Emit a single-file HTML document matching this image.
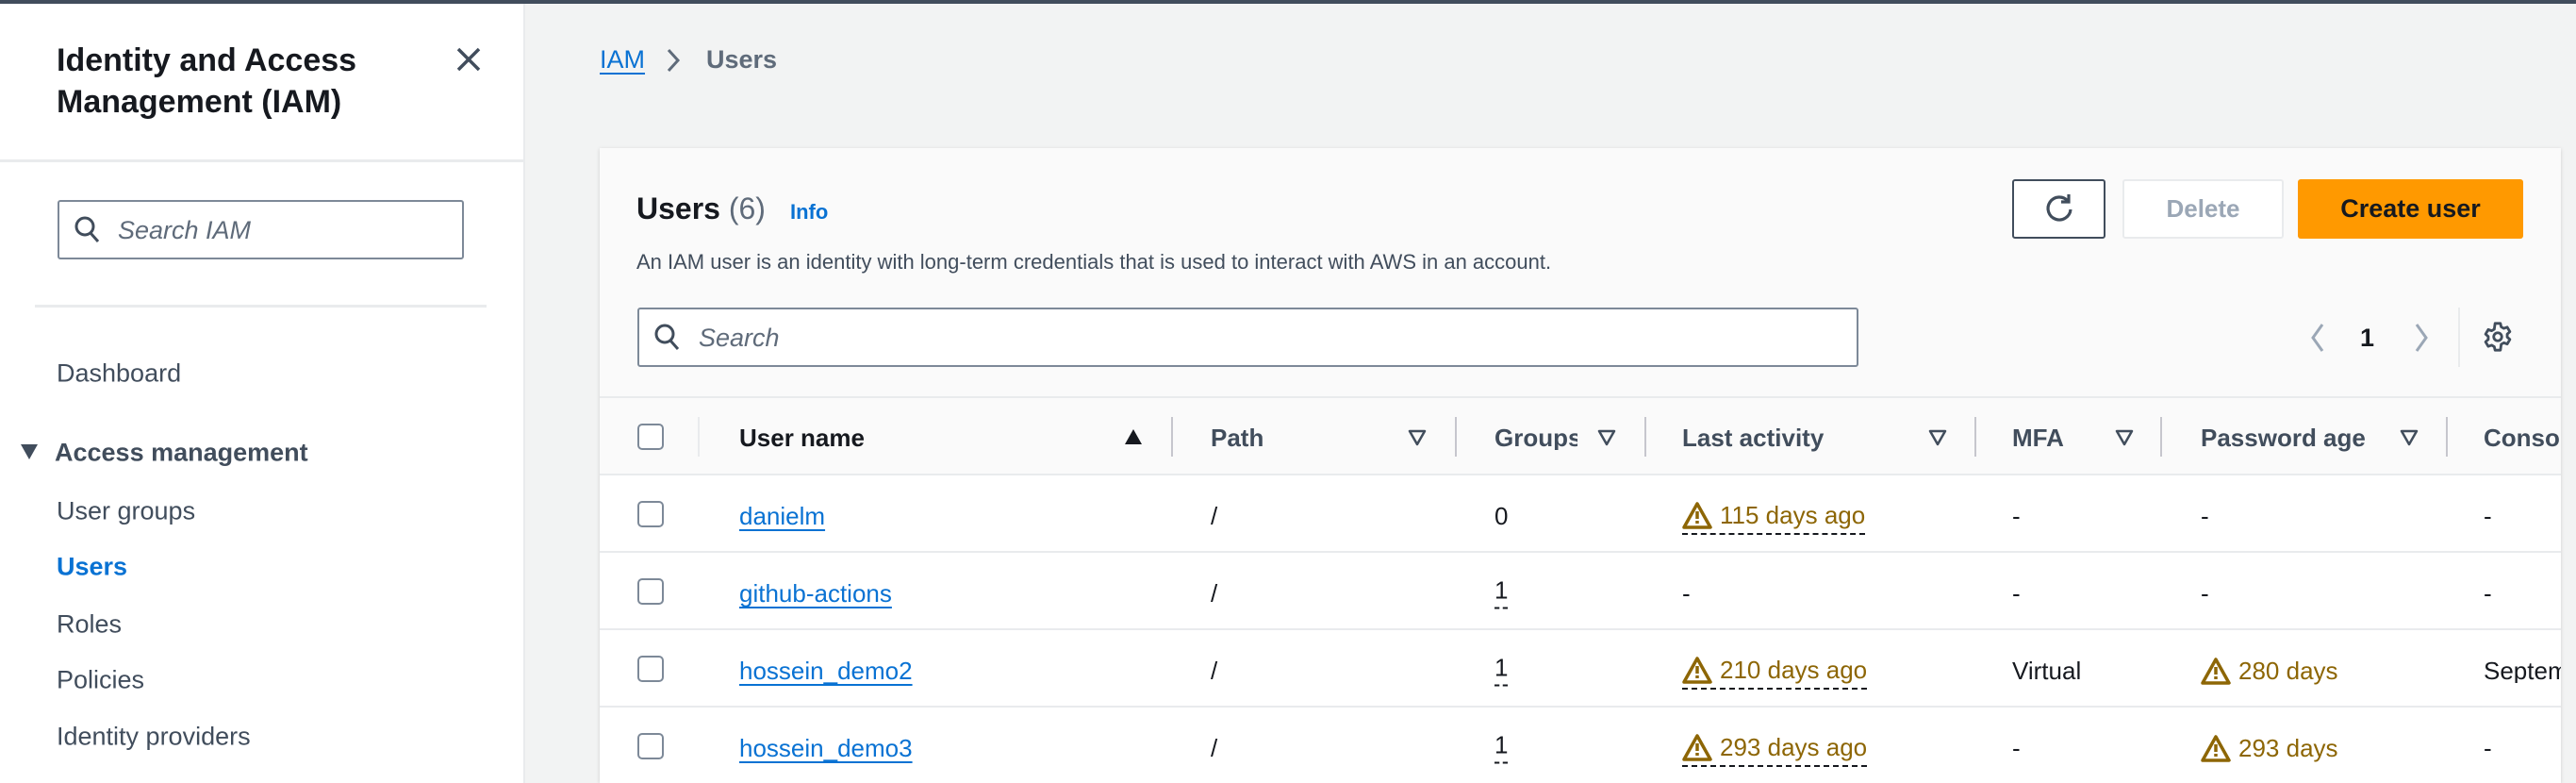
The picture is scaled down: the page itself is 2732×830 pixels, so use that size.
<!DOCTYPE html>
<html><head><meta charset="utf-8"><style>
*{margin:0;padding:0;box-sizing:border-box}
html,body{width:2732px;height:830px;overflow:hidden}
body{background:#f2f3f3;font-family:"Liberation Sans",sans-serif;color:#16191f;position:relative}
.a{position:absolute;white-space:nowrap}
.topbar{left:0;top:0;width:2732px;height:4px;background:#414d5c}
.side{left:0;top:4px;width:557px;height:826px;background:#fff;border-right:2px solid #e9ebed}
.nav{font-size:27px;color:#414d5c;line-height:1;transform:translateY(-50%)}
.link{color:#0972d3;text-decoration:underline;text-underline-offset:5px;text-decoration-thickness:2px}
.warn{color:#8d6605;border-bottom:2px dashed #16191f;padding-bottom:4px;display:flex;align-items:center;gap:8px}
.pw{color:#8d6605;display:flex;align-items:center;gap:8px}
.cell{font-size:26px;line-height:1;transform:translateY(-50%)}
.hdr{font-size:26px;font-weight:bold;color:#414d5c;line-height:1;transform:translateY(-50%)}
.sep{width:2px;height:42px;background:#c6c6cd;top:442px}
.cb{width:28px;height:28px;border:2px solid #7d8998;border-radius:5px;background:#fff;left:676px}
.rowline{left:636px;width:2080px;height:2px;background:#e9ebed}
</style></head><body>
<div class="a topbar"></div>
<div class="a side"></div>
<div class="a" style="left:60px;top:42px;font-size:34px;font-weight:bold;line-height:44px;color:#16191f">Identity and Access<br>Management (IAM)</div>
<svg class="a" style="left:483px;top:49px" width="28" height="28" viewBox="0 0 28 28"><path d="M3 3L25 25M25 3L3 25" stroke="#414d5c" stroke-width="3.5" fill="none"/></svg>
<div class="a" style="left:0;top:169px;width:557px;height:3px;background:#e9ebed"></div>
<div class="a" style="left:61px;top:212px;width:431px;height:63px;border:2px solid #7d8998;border-radius:3px;background:#fff"></div>
<svg class="a" style="left:78px;top:228px" width="30" height="32" viewBox="0 0 30 32"><circle cx="12" cy="12" r="9" stroke="#414d5c" stroke-width="3" fill="none"/><path d="M18 19l8 9" stroke="#414d5c" stroke-width="3"/></svg>
<div class="a" style="left:125px;top:229px;font-size:27px;font-style:italic;color:#5f6b7a">Search IAM</div>
<div class="a" style="left:37px;top:323px;width:479px;height:3px;background:#e9ebed"></div>
<div class="a nav" style="left:60px;top:396px">Dashboard</div>
<svg class="a" style="left:20px;top:469px" width="22" height="20"><path d="M2 2h18L11 18z" fill="#414d5c"/></svg>
<div class="a nav" style="left:58px;top:480px;font-weight:bold">Access management</div>
<div class="a nav" style="left:60px;top:542px">User groups</div>
<div class="a nav" style="left:60px;top:601px;color:#0972d3;font-weight:bold">Users</div>
<div class="a nav" style="left:60px;top:662px">Roles</div>
<div class="a nav" style="left:60px;top:721px">Policies</div>
<div class="a nav" style="left:60px;top:781px">Identity providers</div>

<div class="a link" style="left:636px;top:48px;font-size:27px">IAM</div>
<svg class="a" style="left:706px;top:50px" width="16" height="28"><path d="M3 3l10 11-10 11" stroke="#5f6b7a" stroke-width="3" fill="none"/></svg>
<div class="a" style="left:749px;top:48px;font-size:27px;font-weight:bold;color:#5f6b7a">Users</div>

<div class="a" style="left:636px;top:157px;width:2080px;height:673px;background:#fafafa;box-shadow:0 1px 4px rgba(0,0,0,.15)"></div>
<div class="a" style="left:636px;top:422px;width:2080px;height:408px;background:#fff"></div>
<div class="a" style="left:636px;top:420px;width:2080px;height:84px;background:#fafafa;border-top:2px solid #e9ebed;border-bottom:2px solid #e9ebed"></div>

<div class="a" style="left:675px;top:203px;font-size:32px;font-weight:bold">Users <span style="font-weight:normal;color:#5f6b7a">(6)</span></div>
<div class="a" style="left:838px;top:212px;font-size:22px;font-weight:bold;color:#0972d3">Info</div>
<div class="a" style="left:675px;top:265px;font-size:22px;color:#414d5c">An IAM user is an identity with long-term credentials that is used to interact with AWS in an account.</div>

<div class="a" style="left:2134px;top:190px;width:99px;height:63px;border:2px solid #414d5c;border-radius:3px;background:#fff"></div>
<svg class="a" style="left:2166px;top:204px" width="36" height="36" viewBox="0 0 36 36"><path d="M27 9A12 12 0 1 0 30 18" stroke="#414d5c" stroke-width="3.2" fill="none"/><path d="M20 8h8V0" stroke="#414d5c" stroke-width="3.2" fill="none" transform="translate(0,2)"/></svg>
<div class="a" style="left:2251px;top:190px;width:171px;height:63px;border:2px solid #e9ebed;border-radius:3px;background:#fff;font-size:26px;font-weight:bold;color:#9ba7b6;text-align:center;line-height:59px">Delete</div>
<div class="a" style="left:2437px;top:190px;width:239px;height:63px;border-radius:3px;background:#ff9900;font-size:27px;font-weight:bold;color:#16191f;text-align:center;line-height:63px">Create user</div>

<div class="a" style="left:676px;top:326px;width:1295px;height:63px;border:2px solid #7d8998;border-radius:3px;background:#fff"></div>
<svg class="a" style="left:693px;top:342px" width="30" height="32" viewBox="0 0 30 32"><circle cx="12" cy="12" r="9" stroke="#414d5c" stroke-width="3" fill="none"/><path d="M18 19l8 9" stroke="#414d5c" stroke-width="3"/></svg>
<div class="a" style="left:741px;top:343px;font-size:27px;font-style:italic;color:#5f6b7a">Search</div>

<svg class="a" style="left:2448px;top:341px" width="20" height="34"><path d="M15 3L5 17l10 14" stroke="#9ba7b6" stroke-width="3" fill="none"/></svg>
<div class="a" style="left:2503px;top:343px;font-size:27px;font-weight:bold">1</div>
<svg class="a" style="left:2558px;top:341px" width="20" height="34"><path d="M5 3l10 14L5 31" stroke="#9ba7b6" stroke-width="3" fill="none"/></svg>
<div class="a" style="left:2607px;top:326px;width:2px;height:63px;background:#e9ebed"></div>
<svg class="a" style="left:2632px;top:340px" width="34" height="34" viewBox="0 0 24 24"><path d="M10 2h4l.6 2.6 2 1.1 2.5-.9 2 3.4-2 1.8v2.2l2 1.8-2 3.4-2.5-.9-2 1.1L14 22h-4l-.6-2.6-2-1.1-2.5.9-2-3.4 2-1.8V11.8l-2-1.8 2-3.4 2.5.9 2-1.1z" stroke="#414d5c" stroke-width="2" fill="none" stroke-linejoin="round"/><circle cx="12" cy="12" r="3" stroke="#414d5c" stroke-width="2" fill="none"/></svg>

<div class="a cb" style="top:449px"></div>
<div class="a sep" style="left:740px;background:#e9ebed"></div>
<div class="a hdr" style="left:784px;top:464px;color:#16191f">User name</div>
<svg class="a" style="left:1192px;top:454px" width="20" height="18"><path d="M10 1L19 17H1z" fill="#16191f"/></svg>
<div class="a sep" style="left:1242px"></div>
<div class="a hdr" style="left:1284px;top:464px">Path</div>
<svg class="a" style="left:1493px;top:455px" width="20" height="18"><path d="M2 2h16L10 16z" stroke="#414d5c" stroke-width="2.5" fill="none" stroke-linejoin="round"/></svg>
<div class="a sep" style="left:1543px"></div>
<div class="a hdr" style="left:1585px;top:464px;width:88px;overflow:hidden">Groups</div>
<svg class="a" style="left:1694px;top:455px" width="20" height="18"><path d="M2 2h16L10 16z" stroke="#414d5c" stroke-width="2.5" fill="none" stroke-linejoin="round"/></svg>
<div class="a sep" style="left:1744px"></div>
<div class="a hdr" style="left:1784px;top:464px">Last activity</div>
<svg class="a" style="left:2045px;top:455px" width="20" height="18"><path d="M2 2h16L10 16z" stroke="#414d5c" stroke-width="2.5" fill="none" stroke-linejoin="round"/></svg>
<div class="a sep" style="left:2094px"></div>
<div class="a hdr" style="left:2134px;top:464px">MFA</div>
<svg class="a" style="left:2243px;top:455px" width="20" height="18"><path d="M2 2h16L10 16z" stroke="#414d5c" stroke-width="2.5" fill="none" stroke-linejoin="round"/></svg>
<div class="a sep" style="left:2291px"></div>
<div class="a hdr" style="left:2334px;top:464px">Password age</div>
<svg class="a" style="left:2545px;top:455px" width="20" height="18"><path d="M2 2h16L10 16z" stroke="#414d5c" stroke-width="2.5" fill="none" stroke-linejoin="round"/></svg>
<div class="a sep" style="left:2594px"></div>
<div class="a hdr" style="left:2634px;top:464px;width:82px;overflow:hidden">Console</div>

<div class="a rowline" style="top:584px"></div>
<div class="a rowline" style="top:666px"></div>
<div class="a rowline" style="top:748px"></div>

<div class="a cb" style="top:531px"></div>
<div class="a cell link" style="left:784px;top:547px">danielm</div>
<div class="a cell" style="left:1284px;top:547px">/</div>
<div class="a cell" style="left:1585px;top:547px">0</div>
<div class="a cell warn" style="left:1784px;top:549px"><svg width="32" height="30" viewBox="0 0 32 30"><path d="M16 3L30 28H2z" stroke="#8d6605" stroke-width="3.5" fill="none" stroke-linejoin="round"/><path d="M16 11v8M16 21v3" stroke="#8d6605" stroke-width="3.5"/></svg>115 days ago</div>
<div class="a cell" style="left:2134px;top:547px">-</div>
<div class="a cell" style="left:2334px;top:547px">-</div>
<div class="a cell" style="left:2634px;top:547px">-</div>

<div class="a cb" style="top:613px"></div>
<div class="a cell link" style="left:784px;top:629px">github-actions</div>
<div class="a cell" style="left:1284px;top:629px">/</div>
<div class="a cell" style="left:1585px;top:629px;border-bottom:2px dashed #16191f;padding-bottom:5px">1</div>
<div class="a cell" style="left:1784px;top:629px">-</div>
<div class="a cell" style="left:2134px;top:629px">-</div>
<div class="a cell" style="left:2334px;top:629px">-</div>
<div class="a cell" style="left:2634px;top:629px">-</div>

<div class="a cb" style="top:695px"></div>
<div class="a cell link" style="left:784px;top:711px">hossein_demo2</div>
<div class="a cell" style="left:1284px;top:711px">/</div>
<div class="a cell" style="left:1585px;top:711px;border-bottom:2px dashed #16191f;padding-bottom:5px">1</div>
<div class="a cell warn" style="left:1784px;top:713px"><svg width="32" height="30" viewBox="0 0 32 30"><path d="M16 3L30 28H2z" stroke="#8d6605" stroke-width="3.5" fill="none" stroke-linejoin="round"/><path d="M16 11v8M16 21v3" stroke="#8d6605" stroke-width="3.5"/></svg>210 days ago</div>
<div class="a cell" style="left:2134px;top:711px">Virtual</div>
<div class="a cell pw" style="left:2334px;top:711px"><svg width="32" height="30" viewBox="0 0 32 30"><path d="M16 3L30 28H2z" stroke="#8d6605" stroke-width="3.5" fill="none" stroke-linejoin="round"/><path d="M16 11v8M16 21v3" stroke="#8d6605" stroke-width="3.5"/></svg>280 days</div>
<div class="a cell" style="left:2634px;top:711px;width:82px;overflow:hidden">September</div>

<div class="a cb" style="top:777px"></div>
<div class="a cell link" style="left:784px;top:793px">hossein_demo3</div>
<div class="a cell" style="left:1284px;top:793px">/</div>
<div class="a cell" style="left:1585px;top:793px;border-bottom:2px dashed #16191f;padding-bottom:5px">1</div>
<div class="a cell warn" style="left:1784px;top:795px"><svg width="32" height="30" viewBox="0 0 32 30"><path d="M16 3L30 28H2z" stroke="#8d6605" stroke-width="3.5" fill="none" stroke-linejoin="round"/><path d="M16 11v8M16 21v3" stroke="#8d6605" stroke-width="3.5"/></svg>293 days ago</div>
<div class="a cell" style="left:2134px;top:793px">-</div>
<div class="a cell pw" style="left:2334px;top:793px"><svg width="32" height="30" viewBox="0 0 32 30"><path d="M16 3L30 28H2z" stroke="#8d6605" stroke-width="3.5" fill="none" stroke-linejoin="round"/><path d="M16 11v8M16 21v3" stroke="#8d6605" stroke-width="3.5"/></svg>293 days</div>
<div class="a cell" style="left:2634px;top:793px">-</div>
</body></html>
